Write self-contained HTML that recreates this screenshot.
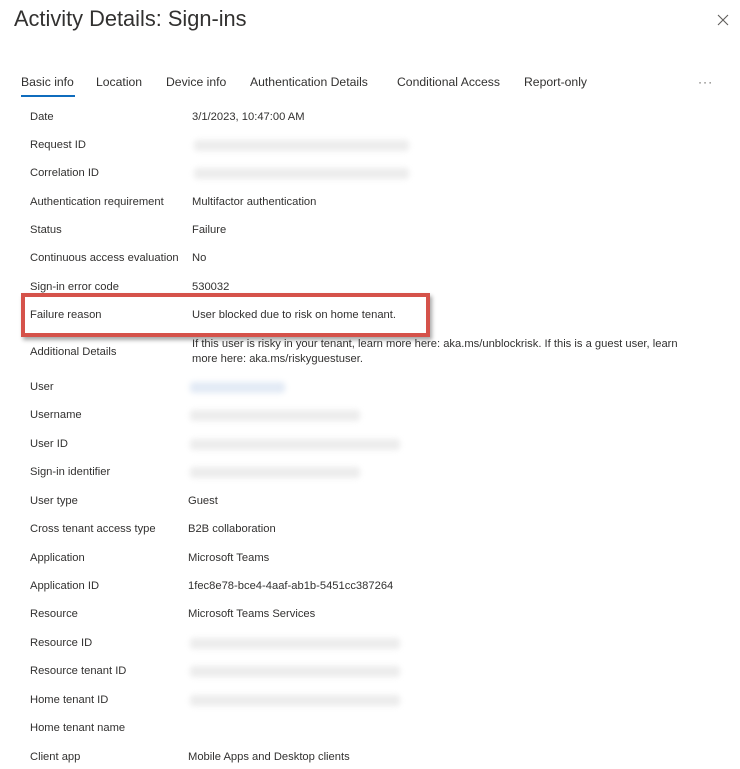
<!DOCTYPE html>
<html><head><meta charset="utf-8"><style>
body{margin:0;width:740px;height:769px;background:#fff;font-family:"Segoe UI","Liberation Sans",sans-serif;color:#323130;position:relative;overflow:hidden}
.t{position:absolute;font-size:11.2px;white-space:nowrap;line-height:14px}
.title{position:absolute;left:14px;top:6px;font-size:21.8px;color:#323130}
.tab{position:absolute;top:75px;font-size:12.2px;color:#323130}
.ul{position:absolute;left:21px;top:95px;width:54px;height:2px;background:#0f6cbd}
.b{position:absolute;height:11px;background:#ececec;filter:blur(3px);border-radius:3px}
.box{position:absolute;left:21px;top:293px;width:401px;height:36px;border:4px solid #d5524a;box-shadow:2px 3px 4px rgba(0,0,0,.35)}
</style></head><body>
<div class="title">Activity Details: Sign-ins</div>
<svg style="position:absolute;left:717px;top:14px" width="12" height="12"><path d="M1 1L11 11M11 1L1 11" stroke="#605e5c" stroke-width="1.1"/></svg>
<div class="tab" style="left:21px">Basic info</div>
<div class="tab" style="left:96px">Location</div>
<div class="tab" style="left:166px">Device info</div>
<div class="tab" style="left:250px">Authentication Details</div>
<div class="tab" style="left:397px">Conditional Access</div>
<div class="tab" style="left:524px">Report-only</div>
<div class="tab" style="left:698px;color:#605e5c;letter-spacing:1px">···</div>
<div class="ul"></div>

<div class="t" style="left:30px;top:110px">Date</div><div class="t" style="left:192px;top:110px">3/1/2023, 10:47:00 AM</div>
<div class="t" style="left:30px;top:138px">Request ID</div><div class="b" style="left:194px;top:140px;width:215px"></div>
<div class="t" style="left:30px;top:166px">Correlation ID</div><div class="b" style="left:194px;top:168px;width:215px"></div>
<div class="t" style="left:30px;top:195px">Authentication requirement</div><div class="t" style="left:192px;top:195px">Multifactor authentication</div>
<div class="t" style="left:30px;top:223px">Status</div><div class="t" style="left:192px;top:223px">Failure</div>
<div class="t" style="left:30px;top:251px">Continuous access evaluation</div><div class="t" style="left:192px;top:251px">No</div>
<div class="t" style="left:30px;top:280px">Sign-in error code</div><div class="t" style="left:192px;top:280px">530032</div>
<div class="box"></div>
<div class="t" style="left:30px;top:308px">Failure reason</div><div class="t" style="left:192px;top:308px">User blocked due to risk on home tenant.</div>
<div class="t" style="left:30px;top:345px">Additional Details</div>
<div class="t" style="left:192px;top:337px;line-height:15px">If this user is risky in your tenant, learn more here: aka.ms/unblockrisk. If this is a guest user, learn<br>more here: aka.ms/riskyguestuser.</div>
<div class="t" style="left:30px;top:380px">User</div><div class="b" style="left:190px;top:382px;width:95px;background:#e2eaf5"></div>
<div class="t" style="left:30px;top:408px">Username</div><div class="b" style="left:190px;top:410px;width:170px"></div>
<div class="t" style="left:30px;top:437px">User ID</div><div class="b" style="left:190px;top:439px;width:210px"></div>
<div class="t" style="left:30px;top:465px">Sign-in identifier</div><div class="b" style="left:190px;top:467px;width:170px"></div>
<div class="t" style="left:30px;top:494px">User type</div><div class="t" style="left:188px;top:494px">Guest</div>
<div class="t" style="left:30px;top:522px">Cross tenant access type</div><div class="t" style="left:188px;top:522px">B2B collaboration</div>
<div class="t" style="left:30px;top:551px">Application</div><div class="t" style="left:188px;top:551px">Microsoft Teams</div>
<div class="t" style="left:30px;top:579px">Application ID</div><div class="t" style="left:188px;top:579px">1fec8e78-bce4-4aaf-ab1b-5451cc387264</div>
<div class="t" style="left:30px;top:607px">Resource</div><div class="t" style="left:188px;top:607px">Microsoft Teams Services</div>
<div class="t" style="left:30px;top:636px">Resource ID</div><div class="b" style="left:190px;top:638px;width:210px"></div>
<div class="t" style="left:30px;top:664px">Resource tenant ID</div><div class="b" style="left:190px;top:666px;width:210px"></div>
<div class="t" style="left:30px;top:693px">Home tenant ID</div><div class="b" style="left:190px;top:695px;width:210px"></div>
<div class="t" style="left:30px;top:721px">Home tenant name</div>
<div class="t" style="left:30px;top:750px">Client app</div><div class="t" style="left:188px;top:750px">Mobile Apps and Desktop clients</div>
</body></html>
